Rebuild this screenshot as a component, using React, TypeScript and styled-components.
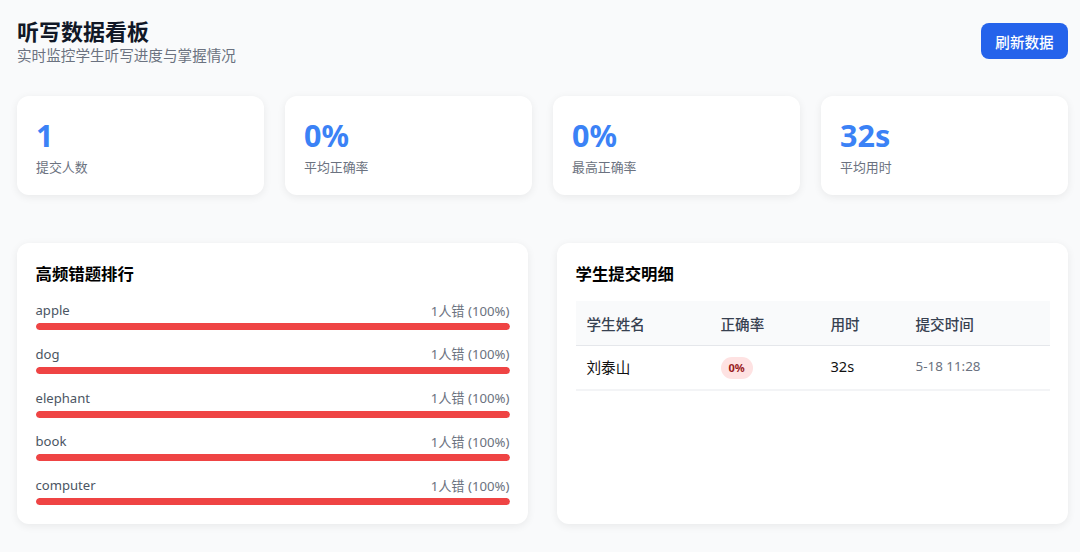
import React from 'react';
import styled, { createGlobalStyle } from 'styled-components';

const stats = [
  { value: '1', label: '提交人数' },
  { value: '0%', label: '平均正确率' },
  { value: '0%', label: '最高正确率' },
  { value: '32s', label: '平均用时' },
];

const words = ['apple', 'dog', 'elephant', 'book', 'computer'];

const App = () => {
  return (
    <>
      <GlobalStyle />
      <Page>
        <Header>
          <div>
            <Title>听写数据看板</Title>
            <Subtitle>实时监控学生听写进度与掌握情况</Subtitle>
          </div>
          <RefreshButton type='button'>刷新数据</RefreshButton>
        </Header>

        <StatGrid>
          {stats.map((stat) => (
            <StatCard key={stat.label}>
              <StatValue>{stat.value}</StatValue>
              <StatLabel>{stat.label}</StatLabel>
            </StatCard>
          ))}
        </StatGrid>

        <PanelGrid>
          <Panel>
            <PanelTitle>高频错题排行</PanelTitle>
            <WordList>
              {words.map((word) => (
                <li key={word}>
                  <WordRow>
                    <Word>{word}</Word>
                    <WordCount>1人错 (100%)</WordCount>
                  </WordRow>
                  <Track>
                    <Fill style={{ width: '100%' }} />
                  </Track>
                </li>
              ))}
            </WordList>
          </Panel>

          <Panel>
            <PanelTitle>学生提交明细</PanelTitle>
            <Table>
              <colgroup>
                <col width={134} />
                <col width={110} />
                <col width={85} />
                <col />
              </colgroup>
              <thead>
                <tr>
                  <Th>学生姓名</Th>
                  <Th>正确率</Th>
                  <Th>用时</Th>
                  <Th>提交时间</Th>
                </tr>
              </thead>
              <tbody>
                <tr>
                  <Td>刘泰山</Td>
                  <BadgeCell>
                    <RateBadge>0%</RateBadge>
                  </BadgeCell>
                  <Td>32s</Td>
                  <TimeCell>5-18 11:28</TimeCell>
                </tr>
              </tbody>
            </Table>
          </Panel>
        </PanelGrid>
      </Page>
    </>
  );
};

export default App;

const GlobalStyle = createGlobalStyle`
  * {
    box-sizing: border-box;
  }
  body {
    margin: 0;
    background-color: #f9fafb;
    font-family: 'Noto Sans', 'Noto Sans CJK SC', sans-serif;
  }
`;

const Page = styled.div`
  width: 1080px;
  height: 552px;
  padding: 18px 12px 28px 17px;
  overflow: hidden;
`;

const Header = styled.header`
  display: flex;
  justify-content: space-between;
  align-items: flex-start;
  height: 78px;
`;

const Title = styled.h1`
  margin: 0;
  font-size: 22px;
  line-height: 26px;
  font-weight: 700;
  color: #111827;
`;

const Subtitle = styled.p`
  margin: 0;
  font-size: 14.6px;
  line-height: 22px;
  color: #6b7280;
`;

const RefreshButton = styled.button`
  width: 87px;
  height: 36px;
  margin-top: 5px;
  border: 0;
  border-radius: 8px;
  background-color: #2563eb;
  color: #fff;
  font-family: inherit;
  font-size: 14.6px;
  font-weight: 500;
  cursor: pointer;
`;

const StatGrid = styled.section`
  display: grid;
  grid-template-columns: repeat(4, 247px);
  column-gap: 21px;
`;

const StatCard = styled.div`
  height: 99px;
  padding: 19px 19px;
  border-radius: 12px;
  background-color: #fff;
  box-shadow: 0 2px 8px rgba(0, 0, 0, 0.07);
`;

const StatValue = styled.div`
  font-size: 30.5px;
  line-height: 40px;
  font-weight: 700;
  color: #3b82f6;
`;

const StatLabel = styled.div`
  margin-top: 2px;
  font-size: 12.9px;
  line-height: 20px;
  color: #6b7280;
`;

const PanelGrid = styled.section`
  display: grid;
  grid-template-columns: repeat(2, 511px);
  column-gap: 29px;
  margin-top: 48px;
`;

const Panel = styled.div`
  height: 281px;
  padding: 19px 18.5px;
  border-radius: 12px;
  background-color: #fff;
  box-shadow: 0 2px 8px rgba(0, 0, 0, 0.07);
`;

const PanelTitle = styled.h2`
  margin: 0;
  font-size: 16.4px;
  line-height: 24px;
  font-weight: 700;
  color: #000;
`;

const WordList = styled.ul`
  display: flex;
  flex-direction: column;
  gap: 12.8px;
  margin: 13px 0 0;
  padding: 0;
  list-style: none;
`;

const WordRow = styled.div`
  display: flex;
  justify-content: space-between;
  align-items: center;
  height: 22px;
  margin-bottom: 2px;
  font-size: 13.1px;
`;

const Word = styled.span`
  color: #4b5563;
`;

const WordCount = styled.span`
  font-size: 13.2px;
  color: #6b7280;
`;

const Track = styled.div`
  height: 7px;
  border-radius: 4px;
  background-color: #f3f4f6;
  overflow: hidden;
`;

const Fill = styled.div`
  height: 100%;
  border-radius: 4px;
  background-color: #ef4444;
`;

const Table = styled.table`
  width: 100%;
  margin-top: 15px;
  border-collapse: collapse;
  table-layout: fixed;
`;

const Th = styled.th`
  height: 44.5px;
  padding: 0 11px;
  border-bottom: 1px solid #e5e7eb;
  background-color: #f9fafb;
  text-align: left;
  font-size: 14.6px;
  font-weight: 500;
  color: #374151;
`;

const Td = styled.td`
  height: 44.5px;
  padding: 0 11px 3px;
  border-bottom: 2px solid #f3f4f6;
  font-size: 14.6px;
  color: #111;
`;

const BadgeCell = styled(Td)`
  padding: 0 11px;
`;

const TimeCell = styled(Td)`
  font-size: 13.4px;
  color: #6b7280;
`;

const RateBadge = styled.span`
  display: inline-block;
  padding: 0 8px;
  height: 22px;
  line-height: 22px;
  border-radius: 11px;
  background-color: #fee2e2;
  font-size: 11px;
  font-weight: 700;
  color: #991b1b;
`;
